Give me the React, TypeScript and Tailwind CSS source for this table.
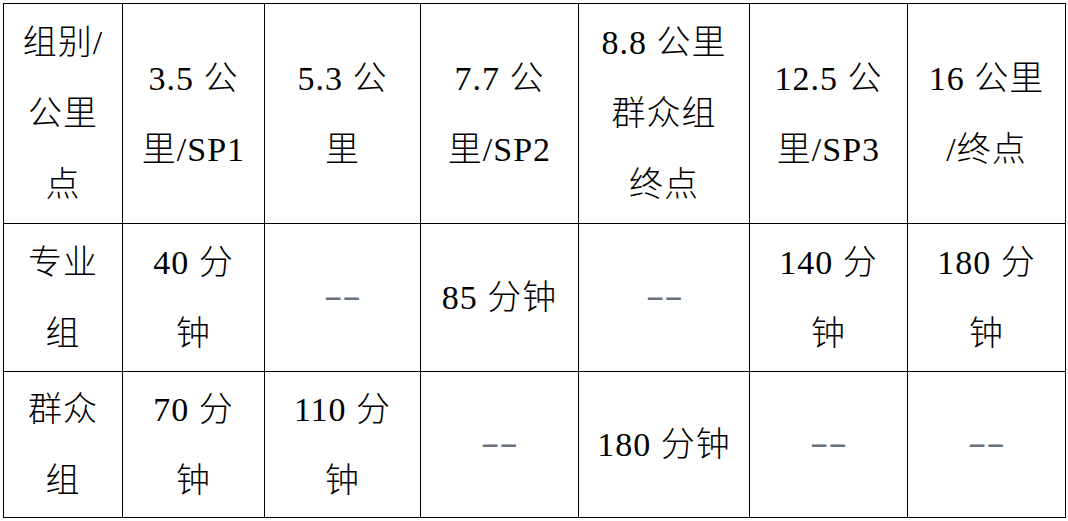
import React from "react";

const rows: string[][][] = [
  [["组别/", "公里", "点"], ["3.5 公", "里/SP1"], ["5.3 公", "里"], ["7.7 公", "里/SP2"], ["8.8 公里", "群众组", "终点"], ["12.5 公", "里/SP3"], ["16 公里", "/终点"]],
  [["专业", "组"], ["40 分", "钟"], ["--"], ["85 分钟"], ["--"], ["140 分", "钟"], ["180 分", "钟"]],
  [["群众", "组"], ["70 分", "钟"], ["110 分", "钟"], ["--"], ["180 分钟"], ["--"], ["--"]],
];

export default function App() {
  return (
    <div className="w-[1068px] h-[521px] bg-white pt-[3px] pl-[3px]">
      <div className="inline-grid bg-black gap-px p-px grid-cols-[118px_141px_155px_157px_170px_157px_157px] grid-rows-[219px_147px_145px] text-black text-[34px] leading-[71px] font-extralight font-['Liberation_Serif','Noto_Sans_CJK_SC',serif]">
        {rows.map((row, ri) =>
          row.map((cell, ci) => (
            <div key={`${ri}-${ci}`} className="bg-white flex flex-col items-center justify-center text-center whitespace-nowrap">
              {cell.map((line, li) =>
                line === "--" ? (
                  <span key={li} className="inline-block text-gray-500 scale-x-[1.65] -translate-y-[2px]">--</span>
                ) : (
                  <span key={li} className="tracking-[1px]">{line}</span>
                )
              )}
            </div>
          ))
        )}
      </div>
    </div>
  );
}
